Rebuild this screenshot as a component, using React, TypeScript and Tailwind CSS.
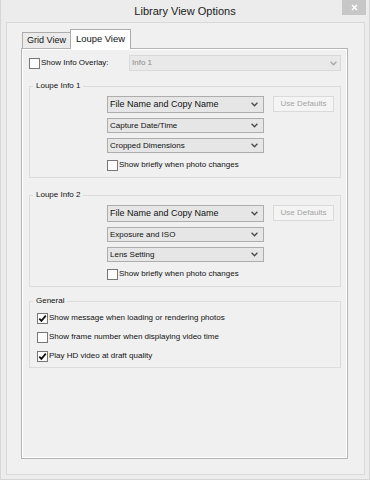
import React from "react";

function Chevron({ color = "#4a4a4a" }: { color?: string }) {
  return (
    <svg width="7" height="5" viewBox="0 0 7 5" className="shrink-0">
      <path d="M0.6 0.8 L3.5 3.8 L6.4 0.8" stroke={color} strokeWidth="1.3" fill="none" />
    </svg>
  );
}

function Check({ checked = false }: { checked?: boolean }) {
  return (
    <div className="w-[11px] h-[11px] shrink-0 border border-[#777777] bg-[#fdfdfd] flex items-center justify-center">
      {checked && (
        <svg width="9" height="9" viewBox="0 0 9 9">
          <path d="M1.3 4.6 L3.4 6.9 L7.8 1.6" stroke="#111" strokeWidth="1.7" fill="none" />
        </svg>
      )}
    </div>
  );
}

function Drop({ label, big = false }: { label: string; big?: boolean }) {
  return (
    <div
      className={`w-[157px] ${big ? "h-[17px] text-[9px]" : "h-[15px] text-[8px]"} border border-[#adadad] bg-[#e6e6e6] flex items-center justify-between pl-[2px] pr-[5px] text-[#111]`}
    >
      <span className="leading-none">{label}</span>
      <Chevron />
    </div>
  );
}

function CheckRow({ label, checked = false }: { label: string; checked?: boolean }) {
  return (
    <div className="h-[14px] flex items-center">
      <Check checked={checked} />
      <span className="ml-[1px] text-[8px] leading-none text-[#111]">{label}</span>
    </div>
  );
}

function LoupeGroup({ title, items }: { title: string; items: [string, string, string] }) {
  return (
    <fieldset className="border border-[#dcdcdc] pt-[5px] pb-[5px]">
      <legend className="ml-[3px] px-[3px] text-[8px] leading-[10px] text-[#111]">{title}</legend>
      <div className="pl-[77px] flex flex-col gap-[5px]">
        <div className="flex items-start">
          <Drop label={items[0]} big />
          <div className="ml-[9px] w-[61px] h-[16px] border border-[#dadada] bg-[#f4f4f4] flex items-center justify-center text-[8px] text-[#a3a3a3] leading-none">
            Use Defaults
          </div>
        </div>
        <Drop label={items[1]} />
        <Drop label={items[2]} />
        <CheckRow label="Show briefly when photo changes" />
      </div>
    </fieldset>
  );
}

export default function App() {
  return (
    <div className="w-[370px] h-[480px] bg-[#ececec] border-x border-b border-[#d6d6d6] flex flex-col font-['Liberation_Sans',Arial,sans-serif]">
      <div className="relative h-[22px] shrink-0 flex items-center justify-center text-[11px] text-[#1a1a1a]">
        Library View Options
        <div className="absolute top-0 right-[3px] w-[24px] h-[15px] bg-[#c7c7c7] flex items-center justify-center">
          <svg width="7" height="7" viewBox="0 0 7 7">
            <path d="M1 1 L6 6 M6 1 L1 6" stroke="#fff" strokeWidth="1.5" />
          </svg>
        </div>
      </div>
      <div className="ml-[5px] mr-[4px] mb-[4px] flex-1 border border-[#d9d9d9] bg-[#f0f0f0] pt-[6px] pl-[14px]">
        <div className="ml-[1px] h-[19px] flex items-end">
          <div className="w-[48px] h-[16px] border-l border-t border-[#acacac] bg-[#ebebeb] flex items-center justify-center text-[9px] text-[#111] leading-none">
            Grid View
          </div>
          <div className="relative z-10 w-[61px] h-[20px] -mb-[1px] border-x border-t border-[#acacac] bg-white flex items-center justify-center text-[9.4px] text-[#111] leading-none pb-[1px]">
            Loupe View
          </div>
        </div>
        <div className="w-[327px] h-[411px] border border-[#b4b4b4] bg-[#f0f0f0] shadow-[inset_1px_1px_0_#fff,inset_-1px_-1px_0_#fff] pt-[6px] pl-[7px] pr-[6px]">
          <div className="h-[16px] flex items-center">
            <Check />
            <span className="ml-[1px] text-[8px] leading-none text-[#111]">Show Info Overlay:</span>
            <div className="ml-auto w-[212px] h-[16px] border border-[#d9d9d9] bg-[#e9e9e9] flex items-center justify-between pl-[2px] pr-[3px] text-[8px] text-[#8a8a8a] leading-none">
              <span>Info 1</span>
              <Chevron color="#a8a8a8" />
            </div>
          </div>
          <div className="mt-[10px]">
            <LoupeGroup title="Loupe Info 1" items={["File Name and Copy Name", "Capture Date/Time", "Cropped Dimensions"]} />
          </div>
          <div className="mt-[12px]">
            <LoupeGroup title="Loupe Info 2" items={["File Name and Copy Name", "Exposure and ISO", "Lens Setting"]} />
          </div>
          <div className="mt-[9px]">
            <fieldset className="border border-[#dcdcdc] pt-[5px] pb-[4px]">
              <legend className="ml-[3px] px-[3px] text-[8px] leading-[10px] text-[#111]">General</legend>
              <div className="pl-[7px] flex flex-col gap-[5px]">
                <CheckRow label="Show message when loading or rendering photos" checked />
                <CheckRow label="Show frame number when displaying video time" />
                <CheckRow label="Play HD video at draft quality" checked />
              </div>
            </fieldset>
          </div>
        </div>
      </div>
    </div>
  );
}
